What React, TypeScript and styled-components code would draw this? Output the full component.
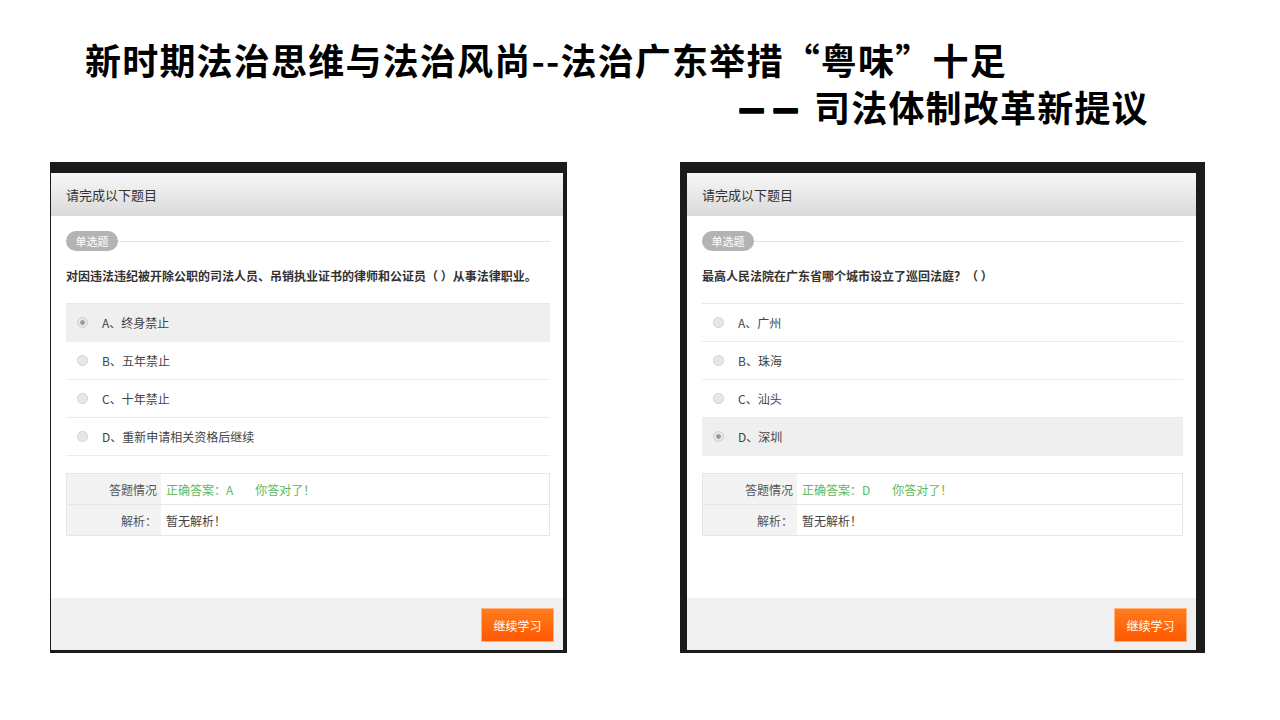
import React from 'react'
import styled, { createGlobalStyle } from 'styled-components'

const GlobalStyle = createGlobalStyle`
  html, body {
    margin: 0;
    padding: 0;
    background: #ffffff;
  }
  body {
    font-family: "Noto Sans CJK SC", "Noto Sans", sans-serif;
  }
`

const Quizzes = [
  {
    question: '对因违法违纪被开除公职的司法人员、吊销执业证书的律师和公证员（ ）从事法律职业。',
    options: ['A、终身禁止', 'B、五年禁止', 'C、十年禁止', 'D、重新申请相关资格后继续'],
    picked: 0,
    answer: 'A',
    frame: { width: 517, pad: '11px 4px 3px 1px' },
  },
  {
    question: '最高人民法院在广东省哪个城市设立了巡回法庭？（ ）',
    options: ['A、广州', 'B、珠海', 'C、汕头', 'D、深圳'],
    picked: 3,
    answer: 'D',
    frame: { width: 525, pad: '11px 9px 3px 7px' },
  },
]

const Page = styled.div`
  width: 1280px;
  height: 720px;
  overflow: hidden;
  box-sizing: border-box;
  padding-top: 36px;
`

const Title = styled.h1`
  margin: 0;
  font-family: "Noto Sans CJK SC", sans-serif;
  font-weight: 700;
  font-size: 36px;
  line-height: 47px;
  color: #000;
  letter-spacing: 1.2px;
`

const TitleLine = styled.div<{ $indent: number }>`
  padding-left: ${(p) => p.$indent}px;
  white-space: nowrap;
  height: 47px;
`

const Dash = styled.span`
  display: inline-block;
  width: 62px;
  margin-right: 14px;
  letter-spacing: 0;
  font-size: 30px;
  vertical-align: top;
  text-shadow: 0 1px 0 #000, 0 -1px 0 #000, 0 2px 0 #000;
`

const Panels = styled.div`
  display: flex;
  align-items: flex-start;
  gap: 113px;
  padding-left: 50px;
  margin-top: 32px;
`

const Frame = styled.div<{ $width: number; $pad: string }>`
  width: ${(p) => p.$width}px;
  padding: ${(p) => p.$pad};
  box-sizing: border-box;
  background: #1b1b1b;
`

const Modal = styled.div`
  background: #fff;
  display: flex;
  flex-direction: column;
`

const Header = styled.div`
  height: 43px;
  display: flex;
  align-items: center;
  padding-left: 15px;
  font-size: 13px;
  color: #333;
  background: linear-gradient(to bottom, #f7f7f7, #dadada);
`

const Body = styled.div`
  height: 382px;
  box-sizing: border-box;
  padding: 15px 13px 0 15px;
`

const TagRow = styled.div`
  display: flex;
  align-items: center;
  height: 20px;
`

const Tag = styled.span`
  width: 52px;
  height: 20px;
  border-radius: 10px;
  background: #b3b3b3;
  color: #fff;
  font-size: 11px;
  display: flex;
  align-items: center;
  justify-content: center;
  flex-shrink: 0;
`

const TagLine = styled.div`
  flex: 1;
  height: 1px;
  background: #e4e4e4;
`

const Question = styled.div`
  margin-top: 16px;
  height: 36px;
  font-size: 12px;
  font-weight: 700;
  color: #333;
  white-space: nowrap;
  line-height: 18px;
`

const OptionList = styled.div`
  border-top: 1px solid #e8e8e8;
`

const Option = styled.div<{ $active: boolean }>`
  height: 37px;
  display: flex;
  align-items: center;
  border-bottom: 1px solid #ececec;
  background: ${(p) => (p.$active ? '#efefef' : '#fff')};
  font-size: 12px;
  color: #444;
`

const Radio = styled.span<{ $checked: boolean }>`
  width: 9px;
  height: 9px;
  margin: 0 14px 0 11px;
  border-radius: 50%;
  border: 1px solid #cfcfcf;
  background: radial-gradient(circle, ${(p) => (p.$checked ? '#9a9a9a 0 2px, #e6e6e6 2.5px' : '#e4e4e4 0, #ececec 100%')});
  flex-shrink: 0;
`

const Result = styled.div`
  margin-top: 17px;
  border: 1px solid #e6e6e6;
  font-size: 12px;
`

const ResultRow = styled.div`
  display: flex;
  height: 30px;
  & + & {
    border-top: 1px solid #e6e6e6;
  }
`

const Label = styled.div`
  width: 94px;
  flex-shrink: 0;
  background: #f3f3f3;
  color: #555;
  display: flex;
  align-items: center;
  justify-content: flex-end;
  padding-right: 4px;
  box-sizing: border-box;
`

const Value = styled.div<{ $ok?: boolean }>`
  display: flex;
  align-items: center;
  padding-left: 5px;
  gap: 22px;
  color: ${(p) => (p.$ok ? '#5cb85c' : '#444')};
`

const Footer = styled.div`
  height: 52px;
  background: #f0f0f0;
  display: flex;
  justify-content: flex-end;
  align-items: flex-start;
  padding: 10px 9px 0 0;
  box-sizing: border-box;
`

const Button = styled.button`
  width: 73px;
  height: 34px;
  border: 1px solid #ffb27a;
  background: linear-gradient(to bottom, #ff7c1e, #ff5800);
  color: #fff;
  font-family: "Noto Sans CJK SC", sans-serif;
  font-size: 12px;
  padding: 0;
  cursor: pointer;
`

export default function App() {
  return (
    <Page>
      <GlobalStyle />
      <Title>
        <TitleLine $indent={85}>新时期法治思维与法治风尚--法治广东举措“粤味”十足</TitleLine>
        <TitleLine $indent={738}>
          <Dash>— —</Dash>司法体制改革新提议
        </TitleLine>
      </Title>
      <Panels>
        {Quizzes.map((quiz) => (
          <Frame key={quiz.answer} $width={quiz.frame.width} $pad={quiz.frame.pad}>
            <Modal>
              <Header>请完成以下题目</Header>
              <Body>
                <TagRow>
                  <Tag>单选题</Tag>
                  <TagLine />
                </TagRow>
                <Question>{quiz.question}</Question>
                <OptionList>
                  {quiz.options.map((opt, i) => (
                    <Option key={opt} $active={i === quiz.picked}>
                      <Radio $checked={i === quiz.picked} />
                      {opt}
                    </Option>
                  ))}
                </OptionList>
                <Result>
                  <ResultRow>
                    <Label>答题情况</Label>
                    <Value $ok>
                      <span>正确答案：{quiz.answer}</span>
                      <span>你答对了！</span>
                    </Value>
                  </ResultRow>
                  <ResultRow>
                    <Label>解析：</Label>
                    <Value>暂无解析！</Value>
                  </ResultRow>
                </Result>
              </Body>
              <Footer>
                <Button>继续学习</Button>
              </Footer>
            </Modal>
          </Frame>
        ))}
      </Panels>
    </Page>
  )
}
